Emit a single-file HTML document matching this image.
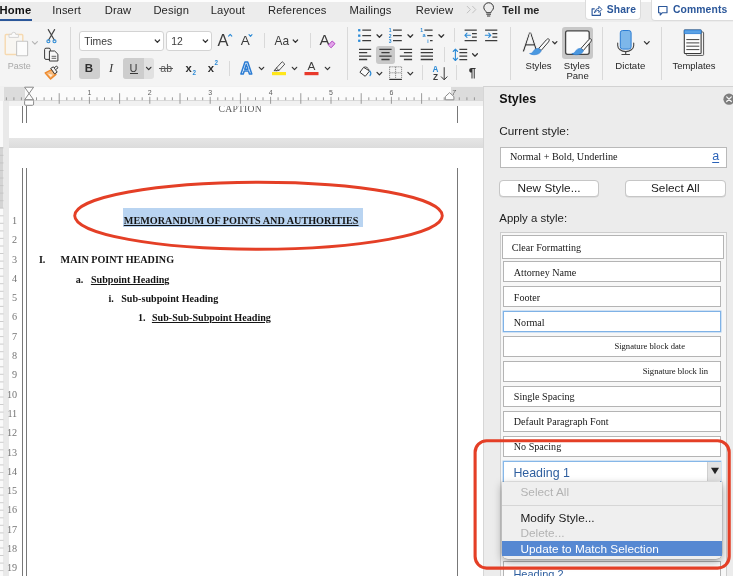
<!DOCTYPE html>
<html lang="en">
<head>
<meta charset="utf-8">
<title>Word - Styles Pane</title>
<style>
html,body{margin:0;padding:0;}
body{width:733px;height:576px;position:relative;overflow:hidden;background:#ececec;
  font-family:"Liberation Sans",sans-serif;color:#222;}
#root{position:absolute;left:0;top:0;width:733px;height:576px;overflow:hidden;will-change:transform;}
.a{position:absolute;}
.t{position:absolute;white-space:nowrap;line-height:14px;height:14px;}
.sans{font-family:"Liberation Sans",sans-serif;}
.serif{font-family:"Liberation Serif",serif;}
.b{font-weight:bold;}
.u{text-decoration:underline;text-decoration-thickness:1px;text-underline-offset:.6px;}

/* ---------- tab bar ---------- */
#topwhite{left:0;top:0;width:733px;height:2px;background:#fdfdfd;}
#tabbar{left:0;top:2px;width:733px;height:20px;background:#ececec;}
.tab{font-size:11.2px;color:#262626;top:2.8px;letter-spacing:.13px;}
.tabbtn{background:#fff;border:1px solid #dcdcdc;border-top:none;border-radius:0 0 4px 4px;box-sizing:border-box;}
.blue{color:#2b579a;}

/* ---------- ribbon ---------- */
#ribbon{left:0;top:22px;width:733px;height:65px;background:#f4f4f4;border-bottom:1px solid #d4d4d4;box-sizing:border-box;}
.vsep{position:absolute;width:1px;background:#d9d9d9;}
.field{position:absolute;background:#fff;border:1px solid #d3d3d3;border-radius:3px;box-sizing:border-box;}
.sel{position:absolute;background:#d2d2d2;border-radius:3px;}
.lbl{font-size:9.7px;color:#262626;}

/* ---------- ruler / document ---------- */
#docbg{left:0;top:86px;width:483px;height:490px;background:#f1f1f1;}
#ruler{left:3.5px;top:87px;width:479.5px;height:13.5px;background:#fbfbfb;}
.rgray{position:absolute;top:0;height:13.5px;background:#dcdcdc;}
#vruler{left:0;top:101px;width:3.2px;height:475px;background:#fafafa;}
#vrulerg{left:0;top:147px;width:3.2px;height:61px;background:#d4d4d4;}
.page{position:absolute;background:#fff;}
.vline{position:absolute;width:1px;background:#787878;}
.ln{font-family:"Liberation Serif",serif;font-size:10.2px;color:#747474;width:13px;text-align:right;left:4.2px;}
.doc{font-family:"Liberation Serif",serif;font-weight:bold;font-size:10.15px;color:#141414;}

/* ---------- styles pane ---------- */
#pane{left:483px;top:86px;width:250px;height:490px;background:#ececec;border-left:1px solid #d6d6d6;border-top:1px solid #d2d2d2;box-sizing:border-box;}
.ph{font-size:11.7px;color:#1c1c1c;}
.btn{position:absolute;background:#fff;border:1px solid #c6c6c6;border-radius:4px;box-sizing:border-box;
  font-size:11.8px;text-align:center;color:#1c1c1c;line-height:16px;box-shadow:0 0.5px 0.5px rgba(0,0,0,.12);}
.item{position:absolute;left:503px;width:218px;height:21px;background:#fff;border:1px solid #b4b4b4;box-sizing:border-box;}
.it{font-family:"Liberation Serif",serif;font-size:10.1px;color:#161616;}
.mi{font-size:11.8px;left:520.5px;}
</style>
</head>
<body>
<div id="root">

<!-- ================= TAB BAR ================= -->
<div class="a" id="tabbar"></div>
<div class="a" id="topwhite"></div>
<div class="t tab b" style="left:-0.6px;color:#111;letter-spacing:.25px;">Home</div>
<div class="a" style="left:0;top:18.5px;width:32px;height:2px;background:#2b579a;"></div>
<div class="t tab" style="left:52.3px;">Insert</div>
<div class="t tab" style="left:104.7px;">Draw</div>
<div class="t tab" style="left:153.4px;">Design</div>
<div class="t tab" style="left:210.7px;">Layout</div>
<div class="t tab" style="left:268px;">References</div>
<div class="t tab" style="left:349.5px;">Mailings</div>
<div class="t tab" style="left:415.7px;">Review</div>

<div class="t tab b" style="left:502.2px;font-size:10.8px;">Tell me</div>
<div class="a tabbtn" style="left:584.5px;top:0;width:56.5px;height:20px;"></div>
<div class="t tab b blue" style="left:606.8px;font-size:10.3px;">Share</div>
<div class="a tabbtn" style="left:650.5px;top:0;width:90px;height:20.5px;"></div>
<div class="t tab b blue" style="left:672.9px;font-size:10.35px;">Comments</div>

<svg class="a" style="left:0;top:0;" width="733" height="22" viewBox="0 0 733 22" fill="none" stroke-linecap="round" stroke-linejoin="round">
  <path d="M467.2 6.300l3.200 3.300l-3.200 3.300M472.600 6.300l3.200 3.300l-3.200 3.300" stroke="#c2c2c2" stroke-width="1"/>
  <path d="M486.400 12.300c0 -1.200 -2.600 -2.300 -2.600 -4.700a4.850 4.850 0 0 1 9.700 0c0 2.400 -2.600 3.500 -2.600 4.700zM486.700 14.200h3.900M487.400 16h2.500" stroke="#333" stroke-width="1"/>
  <path d="M594.300 8.800h-2.200v6.500h8.300v-2.600" stroke="#2b579a" stroke-width="1.150"/>
  <path d="M594.600 12.600c.3 -2.700 2 -4.100 4.300 -4.100v-2.200l3 3.100l-3 3.100v-2.100c-1.800 0 -3.200 .6 -4.300 2.200z" stroke="#2b579a" stroke-width="1"/>
  <path d="M658.600 6.500h8.400v6.200h-4.600l-2.200 2.300v-2.300h-1.600z" stroke="#2b579a" stroke-width="1.150"/>
</svg>
<!-- ================= RIBBON ================= -->
<div class="a" id="ribbon"></div>
<!-- group separators -->
<div class="vsep" style="left:69.5px;top:27px;height:53px;"></div>
<div class="vsep" style="left:346.5px;top:27px;height:53px;"></div>
<div class="vsep" style="left:509.5px;top:27px;height:53px;"></div>
<div class="vsep" style="left:601.5px;top:27px;height:53px;"></div>
<div class="vsep" style="left:661px;top:27px;height:53px;"></div>
<!-- small separators -->
<div class="vsep" style="left:263.5px;top:33px;height:15px;"></div>
<div class="vsep" style="left:309.5px;top:33px;height:15px;"></div>
<div class="vsep" style="left:228.5px;top:61px;height:15px;"></div>
<div class="vsep" style="left:453.5px;top:28px;height:14px;"></div>
<div class="vsep" style="left:443.5px;top:47px;height:15px;"></div>
<div class="vsep" style="left:421.5px;top:65px;height:15px;"></div>
<div class="vsep" style="left:456px;top:65px;height:15px;"></div>

<!-- font name / size fields -->
<div class="field" style="left:78.5px;top:31px;width:85px;height:20px;"></div>
<div class="field" style="left:165.5px;top:31px;width:46px;height:20px;"></div>
<div class="t" style="left:84.3px;top:34.5px;font-size:10.4px;color:#3c3c3c;">Times</div>
<div class="t" style="left:171.2px;top:34.5px;font-size:10.4px;color:#3c3c3c;">12</div>

<!-- selected buttons backgrounds -->
<div class="sel" style="left:78.5px;top:58px;width:21px;height:20.5px;background:#cfcfcf;"></div>
<div class="sel" style="left:123.3px;top:58px;width:31px;height:20.5px;background:#e1e1e1;"></div>
<div class="sel" style="left:123.3px;top:58px;width:20.5px;height:20.5px;background:#cdcdcd;border-radius:3px 0 0 3px;"></div>
<div class="sel" style="left:376px;top:46px;width:18.5px;height:17.5px;background:#c9c9c9;"></div>
<div class="sel" style="left:561.5px;top:27px;width:31.5px;height:31.5px;background:#c8c8c8;"></div>

<!-- text glyph buttons -->
<div class="t b" style="left:84.5px;top:61px;font-size:11.5px;color:#2e2e2e;width:9px;text-align:center;">B</div>
<div class="t serif" style="left:107px;top:61px;font-size:12.5px;color:#3a3a3a;width:8px;text-align:center;font-style:italic;">I</div>
<div class="t" style="left:129px;top:60.5px;font-size:11px;color:#3a3a3a;width:9px;text-align:center;">U</div>
<div class="a" style="left:129.5px;top:73.3px;width:8px;height:1px;background:#3a3a3a;"></div>
<div class="t" style="left:160.3px;top:61px;font-size:10.5px;color:#555;text-decoration:line-through;">ab</div>
<div class="a" style="left:159.3px;top:68.2px;width:13.6px;height:1px;background:#555;"></div>
<div class="t b" style="left:185.5px;top:60.8px;font-size:11.3px;color:#2e2e2e;">x</div>
<div class="t b" style="left:192.5px;top:66.2px;font-size:6.3px;color:#2b8ad6;">2</div>
<div class="t b" style="left:207.8px;top:60.8px;font-size:11.3px;color:#2e2e2e;">x</div>
<div class="t b" style="left:214.6px;top:56px;font-size:6.3px;color:#2b8ad6;">2</div>
<div class="t" style="left:217.5px;top:32.5px;font-size:16.5px;color:#3c3c3c;">A</div>
<div class="t" style="left:240.8px;top:34px;font-size:13.5px;color:#3c3c3c;">A</div>
<div class="t" style="left:274.6px;top:34px;font-size:11.9px;color:#3c3c3c;">Aa</div>
<div class="t" style="left:319.5px;top:33px;font-size:15px;color:#3c3c3c;">A</div>
<div class="t" style="left:307.6px;top:59.4px;font-size:11.8px;color:#3c3c3c;">A</div>
<div class="t lbl" style="left:7.8px;top:58.8px;font-size:9px;color:#a9a9a9;">Paste</div>

<svg class="a" style="left:0;top:0;" width="733" height="90" viewBox="0 0 733 90" fill="none" stroke-linecap="round" stroke-linejoin="round">
  <!-- paste -->
  <rect x="5.2" y="34.5" width="17.6" height="20" rx="1" stroke="#f6d9b0" stroke-width="1.4" fill="#f8f6f2"/>
  <path d="M9 37 v-2.6 h2.6 a2.1 2.1 0 0 1 4.2 0 h2.6 v2.6z" fill="#fafafa" stroke="#d4d4d4" stroke-width="1"/>
  <rect x="16.6" y="41.2" width="11" height="14.6" rx=".6" fill="#fcfcfc" stroke="#c6c6c6" stroke-width="1.1"/>
  <path d="M32.4 41.6 l2.5 2.6 l2.5 -2.6" stroke="#b4b4b4" stroke-width="1.1"/>
  <!-- scissors -->
  <path d="M48.3 29.6 L54.3 40 M54.6 29.6 L48.6 40" stroke="#444" stroke-width="1.15"/>
  <circle cx="48.4" cy="41.3" r="1.5" stroke="#2b8ad6" stroke-width="1.1"/>
  <circle cx="54.5" cy="41.3" r="1.5" stroke="#2b8ad6" stroke-width="1.1"/>
  <!-- copy -->
  <path d="M49.6 59.4 h-3.6 a1.4 1.4 0 0 1 -1.4 -1.4 v-8.4 a1.4 1.4 0 0 1 1.4 -1.4 h3 a1.4 1.4 0 0 1 1.4 1.4 v.9" stroke="#3a3a3a" stroke-width="1"/>
  <path d="M49.8 51 h4.9 l3.2 3.2 v6.8 h-8.1z" stroke="#3a3a3a" stroke-width="1" fill="#f8f8f8"/>
  <path d="M52 56.3 h3.8 M52 58.3 h3.8" stroke="#3a3a3a" stroke-width=".8"/>
  <!-- format painter -->
  <path d="M45.3 72.9 L52.3 69.4 L55.9 74.4 L50.6 79z" fill="#f7b878" stroke="#ee8a2e" stroke-width="1.5"/>
  <path d="M48 73.800 L50.8 77 L52.6 74.700z" fill="#fdeedd" stroke="none"/>
  <path d="M51 68.2 l2.4 -1.4 l3.8 5.3 l-2.3 1.6z" fill="#f4f4f4" stroke="#3a3a3a" stroke-width="1"/>
  <path d="M54.4 67.6 l2.2 -1.6 l1.4 1.8 l-2.2 1.7" stroke="#3a3a3a" stroke-width="1" fill="#f4f4f4"/>

  <!-- chevrons font row -->
  <g stroke="#333" stroke-width="1.2">
    <path d="M155.2 40 l2.2 2.3 l2.2 -2.3"/>
    <path d="M203.2 40 l2.2 2.3 l2.2 -2.3"/>
    <path d="M293.2 40 l2.2 2.3 l2.2 -2.3"/>
    <path d="M146.5 67.3 l2.2 2.3 l2.2 -2.3"/>
    <path d="M259.3 67.3 l2.2 2.3 l2.2 -2.3"/>
    <path d="M292.3 67.3 l2.2 2.3 l2.2 -2.3"/>
    <path d="M325.3 67.3 l2.2 2.3 l2.2 -2.3"/>
  </g>
  <!-- grow / shrink carets -->
  <path d="M228.6 36.2 l1.6 -1.9 l1.6 1.9" stroke="#2b8ad6" stroke-width="1.1"/>
  <path d="M249 34.6 l1.5 1.8 l1.5 -1.8" stroke="#2b8ad6" stroke-width="1.1"/>
  <!-- clear formatting eraser -->
  <path d="M328.6 44.8 l3.6 -3.8 l2.8 2.6 l-3.6 3.9z" fill="#e3a4ea" stroke="#b146c2" stroke-width="1"/>
  <!-- text effects A -->
  <text x="240.6" y="73.7" font-family="Liberation Sans, sans-serif" font-weight="bold" font-size="16.2" fill="#fff" stroke="#2b7cd3" stroke-width="1.5">A</text>
  <!-- highlighter -->
  <path d="M276.6 67.800l5.600 -6.100l2.600 2.400l-5.600 6.100zM276.600 67.800l-1.300 1.700l1.500 1.300l2.400 -.6M275.300 69.500l-1.400 1.200h2.700" stroke="#444" stroke-width=".9" fill="none"/>
  <rect x="272" y="72" width="14" height="3.2" fill="#ffe61a" stroke="none"/>
  <!-- font color bar -->
  <rect x="304.5" y="72" width="14" height="3.2" fill="#e8392b" stroke="none"/>
</svg>

<!-- ribbon labels (right) -->
<div class="t lbl" style="left:525.6px;top:58.7px;font-size:9.55px;">Styles</div>
<div class="t lbl" style="left:563.8px;top:58.7px;font-size:9.55px;">Styles</div>
<div class="t lbl" style="left:566.4px;top:69px;font-size:9.55px;">Pane</div>
<div class="t lbl" style="left:615.3px;top:58.7px;font-size:9.64px;">Dictate</div>
<div class="t lbl" style="left:672.5px;top:58.7px;font-size:9.45px;">Templates</div>
<!-- Styles big A -->
<div class="t" style="left:521.6px;top:27.8px;height:28px;line-height:28px;font-size:28.8px;color:#333;-webkit-text-stroke:1px #f4f4f4;transform:scaleX(.84);transform-origin:0 0;">A</div>
<!-- sort A/Z, pilcrow -->
<div class="t b" style="left:432.6px;top:63px;font-size:8.2px;color:#2b8ad6;">A</div>
<div class="t b" style="left:433px;top:70.5px;font-size:8.2px;color:#3a3a3a;">Z</div>
<div class="t b" style="left:468.8px;top:66.3px;font-size:13px;color:#333;">&para;</div>
<!-- list numbering glyphs -->
<div class="t b" style="left:388.8px;top:23.3px;font-size:5px;color:#2b8ad6;">1</div>
<div class="t b" style="left:388.8px;top:28.6px;font-size:5px;color:#2b8ad6;">2</div>
<div class="t b" style="left:388.8px;top:33.8px;font-size:5px;color:#2b8ad6;">3</div>
<div class="t b" style="left:420.2px;top:23.3px;font-size:5px;color:#2b8ad6;">1</div>
<div class="t b" style="left:422.6px;top:28.4px;font-size:5.5px;color:#2b8ad6;">a</div>
<div class="t b" style="left:427.2px;top:33.8px;font-size:5px;color:#2b8ad6;">i</div>

<svg class="a" style="left:0;top:0;" width="733" height="90" viewBox="0 0 733 90" fill="none" stroke-linecap="butt" stroke-linejoin="round">
  <!-- bullets -->
  <g stroke="#3c3c3c" stroke-width="1.25">
    <path d="M362.3 30.2h8.8M362.3 35.6h8.8M362.3 40.7h8.8"/>
    <path d="M393 30.2h8.8M393 35.6h8.8M393 40.7h8.8"/>
    <path d="M424.4 30.2h8.2M427.2 35.6h5.4M430 40.7h2.6"/>
  </g>
  <g fill="#2b8ad6"><rect x="358.1" y="29.1" width="2.3" height="2.3"/><rect x="358.1" y="34.5" width="2.3" height="2.3"/><rect x="358.1" y="39.6" width="2.3" height="2.3"/></g>
  <!-- chevrons -->
  <g stroke="#333" stroke-width="1.25" stroke-linecap="round">
    <path d="M377 34.8 l2.4 2.5 l2.4 -2.5"/>
    <path d="M407.9 34.8 l2.4 2.5 l2.4 -2.5"/>
    <path d="M438.9 34.8 l2.4 2.5 l2.4 -2.5"/>
    <path d="M472.6 53.7 l2.4 2.5 l2.4 -2.5"/>
    <path d="M377 72.4 l2.4 2.5 l2.4 -2.5"/>
    <path d="M407.9 72.4 l2.4 2.5 l2.4 -2.5"/>
    <path d="M552.7 41.6 l2.1 2.2 l2.1 -2.2"/>
    <path d="M644.4 41.6 l2.4 2.5 l2.4 -2.5"/>
  </g>
  <!-- alignment -->
  <g stroke="#3c3c3c" stroke-width="1.3">
    <path d="M359 49.3h12.2M359 52.7h8.2M359 56.1h12.2M359 59.5h8.2"/>
    <path d="M379.3 49.3h12.3M381.4 52.7h8.2M379.3 56.1h12.3M381.4 59.5h8.2"/>
    <path d="M399.8 49.3h12.3M403.9 52.7h8.2M399.8 56.1h12.3M403.9 59.5h8.2"/>
    <path d="M420.7 49.3h12.3M420.7 52.7h12.3M420.7 56.1h12.3M420.7 59.5h12.3"/>
  </g>
  <!-- outdent / indent -->
  <g stroke="#3c3c3c" stroke-width="1.25">
    <path d="M464.6 30h12.2M472 33.6h4.8M472 37.1h4.8M464.6 40.6h12.2"/>
    <path d="M485.1 30h12.2M492.4 33.6h4.9M492.4 37.1h4.9M485.1 40.6h12.2"/>
  </g>
  <g stroke="#2b8ad6" stroke-width="1.1" stroke-linecap="round">
    <path d="M470.4 35.3h-5.4M467 33.2l-2.1 2.1l2.1 2.1"/>
    <path d="M485.3 35.3h5.4M488.7 33.2l2.1 2.1l-2.1 2.1"/>
    <!-- line spacing arrows -->
    <path d="M455.4 49.3v11M453.2 51.5l2.2 -2.3l2.2 2.3M453.2 58.2l2.2 2.3l2.2 -2.3"/>
  </g>
  <path d="M459.4 49.3h7.8M459.4 52.7h7.8M459.4 56.2h7.8M459.4 59.6h7.8" stroke="#3c3c3c" stroke-width="1.3"/>
  <!-- paint bucket -->
  <path d="M363.6 67.3 l-3.7 5 l5.3 4 l4.4 -5.3z" stroke="#3a3a3a" stroke-width="1" fill="#fafafa"/>
  <path d="M364 67.2 c2.2 -.9 4.2 .6 5.2 3.2" stroke="#3a3a3a" stroke-width=".9"/>
  <path d="M370 71.2 c1.1 1.6 1.1 3.2 0 4.4" stroke="#2b8ad6" stroke-width="1.2" stroke-linecap="round"/>
  <!-- borders -->
  <g stroke="#555" stroke-width=".8" stroke-dasharray="1 1">
    <path d="M389.6 66.8h12M389.6 72.8h12M389.6 66.8v12M395.6 66.8v12M401.6 66.8v12"/>
  </g>
  <path d="M389.3 79.4h12.6" stroke="#333" stroke-width="1.2"/>
  <!-- sort arrow -->
  <path d="M444.2 67.6v12M441.3 76.8l2.9 3l2.9 -3" stroke="#3a3a3a" stroke-width="1" stroke-linecap="round"/>

  <!-- Styles brush -->
  <g id="brush">
    <path d="M548.7 38.9 c.9 .6 .6 1.8 -.2 3 l-7.4 8.6 l-2.4 -2 l7.6 -8.6 c.8 -.9 1.7 -1.4 2.4 -1z" fill="#fafafa" stroke="#3a3a3a" stroke-width="1"/>
    <path d="M538.6 48.4 l2.6 2.2 c-.6 2.6 -3.4 4 -6.4 4.1 c-2 .1 -3.8 -.3 -5.2 -1.200 c1.800 0 2.800 -.7 3.500 -2 c.9 -1.800 3 -3.300 5.500 -3.100z" fill="#4a98e0" stroke="#2b7cd3" stroke-width=".6"/>
  </g>
  <!-- Styles Pane -->
  <rect x="565.6" y="30.8" width="23.600" height="23.500" rx="2" fill="#fbfbfb" stroke="#444" stroke-width="1.300"/>
  <g transform="translate(42.2 0)">
    <path d="M548.7 38.9 c.9 .6 .6 1.8 -.2 3 l-7.4 8.6 l-2.4 -2 l7.6 -8.6 c.8 -.9 1.7 -1.4 2.4 -1z" fill="#fafafa" stroke="#3a3a3a" stroke-width="1"/>
    <path d="M538.6 48.4 l2.6 2.2 c-.6 2.6 -3.4 4 -6.4 4.1 c-2 .1 -3.8 -.3 -5.2 -1.200 c1.800 0 2.800 -.7 3.500 -2 c.9 -1.800 3 -3.300 5.500 -3.100z" fill="#4a98e0" stroke="#2b7cd3" stroke-width=".6"/>
  </g>
  <!-- Dictate mic -->
  <rect x="620.3" y="30.5" width="10.800" height="18.600" rx="2.300" fill="#7db7ea" stroke="#2b7cd3" stroke-width="1"/>
  <path d="M617.7 43v2.400a8 6.200 0 0 0 16 0v-2.400" stroke="#444" stroke-width="1.100" stroke-linecap="round"/>
  <path d="M625.7 51.600v2.800M621.900 54.500h7.600" stroke="#444" stroke-width="1.100" stroke-linecap="round"/>
  <!-- Templates -->
  <rect x="686.3" y="32" width="17.300" height="23.400" rx=".8" fill="#f4f4f4" stroke="#555" stroke-width="1"/>
  <rect x="684.300" y="30" width="16.800" height="23.500" rx=".8" fill="#fdfdfd" stroke="#3a3a3a" stroke-width="1.100"/>
  <rect x="684.300" y="30" width="16.800" height="3.600" fill="#5aa2e6" stroke="#2b7cd3" stroke-width=".8"/>
  <path d="M686.300 39.600h13M686.300 42.900h13M686.300 46.200h13M686.300 49.600h13" stroke="#444" stroke-width="1"/>
</svg>


<!-- ================= DOCUMENT ================= -->
<div class="a" id="docbg"></div>
<div class="a" id="ruler"><div class="rgray" style="left:0;width:21px;"></div><div class="rgray" style="left:447px;width:32.5px;"></div></div>
<div class="a" style="left:4px;top:100px;width:479px;height:1px;background:#d9d9d9;"></div>
<svg class="a" style="left:0;top:86px;" width="483" height="22" viewBox="0 86 483 22" fill="none"><path d="M6.4 97.3V100.2M13.9 97.3V100.2M21.4 97.3V100.2M36.5 97.3V100.2M44.1 97.3V100.2M51.6 97.3V100.2M59.2 93.2V103.8M66.8 97.3V100.2M74.3 97.3V100.2M81.8 97.3V100.2M89.4 96.8V103.8M97.0 97.3V100.2M104.5 97.3V100.2M112.0 97.3V100.2M119.6 93.2V103.8M127.1 97.3V100.2M134.7 97.3V100.2M142.2 97.3V100.2M149.8 96.8V103.8M157.3 97.3V100.2M164.9 97.3V100.2M172.4 97.3V100.2M180.0 93.2V103.8M187.5 97.3V100.2M195.1 97.3V100.2M202.7 97.3V100.2M210.2 96.8V103.8M217.8 97.3V100.2M225.3 97.3V100.2M232.8 97.3V100.2M240.4 93.2V103.8M247.9 97.3V100.2M255.5 97.3V100.2M263.0 97.3V100.2M270.6 96.8V103.8M278.1 97.3V100.2M285.7 97.3V100.2M293.2 97.3V100.2M300.8 93.2V103.8M308.3 97.3V100.2M315.9 97.3V100.2M323.4 97.3V100.2M331.0 96.8V103.8M338.6 97.3V100.2M346.1 97.3V100.2M353.6 97.3V100.2M361.2 93.2V103.8M368.8 97.3V100.2M376.3 97.3V100.2M383.8 97.3V100.2M391.4 96.8V103.8M398.9 97.3V100.2M406.5 97.3V100.2M414.1 97.3V100.2M421.6 93.2V103.8M429.1 97.3V100.2M436.7 97.3V100.2M444.2 97.3V100.2M459.3 97.3V100.2M466.9 97.3V100.2M474.4 97.3V100.2" stroke="#8e8e8e" stroke-width=".9"/><path d="M24.6 87.2H33.6L24.6 99.800H33.6Z" fill="#fdfdfd" stroke="#8a8a8a" stroke-width="1" stroke-linejoin="round"/><rect x="24.6" y="100" width="9" height="5.300" rx="1.2" fill="#fdfdfd" stroke="#8a8a8a" stroke-width="1"/><path d="M445.3 99.8V96.6L449.6 92.6L453.9 96.6V99.8Z" fill="#fdfdfd" stroke="#8a8a8a" stroke-width="1" stroke-linejoin="round"/></svg>
<div class="t" style="left:84.4px;top:85.7px;width:10px;text-align:center;font-size:7px;color:#5c5c5c;">1</div>
<div class="t" style="left:144.8px;top:85.7px;width:10px;text-align:center;font-size:7px;color:#5c5c5c;">2</div>
<div class="t" style="left:205.2px;top:85.7px;width:10px;text-align:center;font-size:7px;color:#5c5c5c;">3</div>
<div class="t" style="left:265.6px;top:85.7px;width:10px;text-align:center;font-size:7px;color:#5c5c5c;">4</div>
<div class="t" style="left:326.0px;top:85.7px;width:10px;text-align:center;font-size:7px;color:#5c5c5c;">5</div>
<div class="t" style="left:386.4px;top:85.7px;width:10px;text-align:center;font-size:7px;color:#5c5c5c;">6</div>
<div class="t" style="left:449.0px;top:85.7px;width:10px;text-align:center;font-size:7px;color:#5c5c5c;font-style:italic;">7</div>
<div class="a" style="left:3.2px;top:101px;width:5.8px;height:475px;background:#e9e9e9;"></div><div class="a" id="vruler"></div><div class="a" id="vrulerg"></div>
<svg class="a" style="left:0;top:0;" width="5" height="576" viewBox="0 0 5 576"><path d="M0 147.8H3.5M0 155.4H3.5M0 162.9H3.5M0 170.5H3.5M0 178.0H3.5M0 185.6H3.5M0 193.1H3.5M0 200.7H3.5M0 208.2H3.5M0 215.8H3.5M0 223.3H3.5M0 230.9H3.5M0 238.4H3.5M0 246.0H3.5M0 253.5H3.5M0 261.1H3.5M0 268.6H3.5M0 276.2H3.5M0 283.7H3.5M0 291.3H3.5M0 298.8H3.5M0 306.4H3.5M0 313.9H3.5M0 321.5H3.5M0 329.0H3.5M0 336.6H3.5M0 344.1H3.5M0 351.7H3.5M0 359.2H3.5M0 366.8H3.5M0 374.3H3.5M0 381.9H3.5M0 389.4H3.5M0 397.0H3.5M0 404.5H3.5M0 412.1H3.5M0 419.6H3.5M0 427.2H3.5M0 434.7H3.5M0 442.3H3.5M0 449.8H3.5M0 457.4H3.5M0 464.9H3.5M0 472.5H3.5M0 480.0H3.5M0 487.6H3.5M0 495.1H3.5M0 502.7H3.5M0 510.2H3.5M0 517.8H3.5M0 525.3H3.5M0 532.9H3.5M0 540.4H3.5M0 548.0H3.5M0 555.5H3.5M0 563.1H3.5M0 570.6H3.5" stroke="#c2c2c2" stroke-width=".8"/></svg>
<div class="page" style="left:9px;top:106px;width:474px;height:32px;"></div>
<div class="a" style="left:9px;top:138px;width:474px;height:10px;background:linear-gradient(#e6e6e6,#dcdcdc);"></div>
<div class="page" style="left:9px;top:148px;width:474px;height:428px;"></div>
<div class="a" style="left:200px;top:106px;width:90px;height:12px;overflow:hidden;"><div class="t serif" style="left:18.6px;top:-4.3px;font-size:9.6px;color:#5e5e5e;letter-spacing:.25px;">CAPTION</div></div>
<div class="vline" style="left:22px;top:106px;height:16.5px;"></div>
<div class="vline" style="left:22px;top:168px;height:408px;"></div>
<div class="vline" style="left:25.8px;top:106px;height:16.5px;"></div>
<div class="vline" style="left:25.8px;top:168px;height:408px;"></div>
<div class="vline" style="left:457px;top:106px;height:16.5px;"></div>
<div class="vline" style="left:457px;top:168px;height:408px;"></div>
<div class="t ln" style="top:214.0px;">1</div>
<div class="t ln" style="top:233.3px;">2</div>
<div class="t ln" style="top:252.6px;">3</div>
<div class="t ln" style="top:271.9px;">4</div>
<div class="t ln" style="top:291.2px;">5</div>
<div class="t ln" style="top:310.4px;">6</div>
<div class="t ln" style="top:329.7px;">7</div>
<div class="t ln" style="top:349.0px;">8</div>
<div class="t ln" style="top:368.3px;">9</div>
<div class="t ln" style="top:387.6px;">10</div>
<div class="t ln" style="top:406.9px;">11</div>
<div class="t ln" style="top:426.2px;">12</div>
<div class="t ln" style="top:445.5px;">13</div>
<div class="t ln" style="top:464.8px;">14</div>
<div class="t ln" style="top:484.1px;">15</div>
<div class="t ln" style="top:503.3px;">16</div>
<div class="t ln" style="top:522.6px;">17</div>
<div class="t ln" style="top:541.9px;">18</div>
<div class="t ln" style="top:561.2px;">19</div>
<div class="a" style="left:123px;top:208.4px;width:240.4px;height:19px;background:#b9d4f1;"></div>
<div class="t doc u" style="left:123.8px;top:214.4px;font-size:10.18px;">MEMORANDUM OF POINTS AND AUTHORITIES</div>
<div class="t doc" style="left:38.9px;top:253.1px;">I.</div>
<div class="t doc" style="left:60.6px;top:253.1px;">MAIN POINT HEADING</div>
<div class="t doc" style="left:75.7px;top:272.8px;">a.</div>
<div class="t doc u" style="left:90.9px;top:272.8px;">Subpoint Heading</div>
<div class="t doc" style="left:108.5px;top:291.8px;">i.</div>
<div class="t doc" style="left:121.2px;top:291.8px;">Sub-subpoint Heading</div>
<div class="t doc" style="left:138px;top:311.1px;">1.</div>
<div class="t doc u" style="left:151.9px;top:311.1px;">Sub-Sub-Subpoint Heading</div>
<svg class="a" style="left:0;top:0;pointer-events:none;" width="733" height="576" viewBox="0 0 733 576" fill="none"><ellipse cx="258.5" cy="215.7" rx="183.8" ry="33.5" stroke="#e43f26" stroke-width="2.9"/></svg>
<!--DOC-END-->

<!-- ================= STYLES PANE ================= -->
<div class="a" id="pane"></div>
<div class="t b" style="left:499.3px;top:92.2px;font-size:12.5px;color:#111;">Styles</div>
<svg class="a" style="left:721.7px;top:92px;" width="14" height="14" viewBox="0 0 14 14"><circle cx="7" cy="7.2" r="5.6" fill="#7d7d7d"/><path d="M4.7 4.9l4.6 4.6M9.3 4.9l-4.6 4.6" stroke="#f2f2f2" stroke-width="1.3" stroke-linecap="round"/></svg>
<div class="t ph" style="left:499.3px;top:124.3px;font-size:11.75px;">Current style:</div>
<div class="a" style="left:500px;top:147px;width:226.5px;height:20.5px;background:#fff;border:1px solid #b9b9b9;box-sizing:border-box;"></div>
<div class="t it" style="left:510px;top:150.2px;font-size:10.2px;">Normal + Bold, Underline</div>
<div class="t" style="left:712.2px;top:149.4px;font-size:12.5px;color:#2a62b8;text-decoration:underline;text-decoration-thickness:1px;text-underline-offset:1.5px;">a</div>
<div class="btn" style="left:499px;top:180px;width:100px;height:17px;line-height:15.5px;">New Style...</div>
<div class="btn" style="left:625px;top:180px;width:100.5px;height:17px;line-height:15.5px;">Select All</div>
<div class="t ph" style="left:499.3px;top:211.3px;font-size:11.4px;">Apply a style:</div>
<div class="a" style="left:499.5px;top:232px;width:227px;height:344px;background:#f7f7f7;border:1px solid #cdcdcd;border-bottom:none;box-sizing:border-box;"></div>
<div class="item" style="left:501.5px;top:234.5px;width:222px;height:24px;"></div>
<div class="t it" style="left:511.8px;top:241px;">Clear Formatting</div>
<div class="item" style="top:261px;"></div>
<div class="t it" style="left:513.8px;top:265.5px;">Attorney Name</div>
<div class="item" style="top:286px;"></div>
<div class="t it" style="left:513.8px;top:290.5px;">Footer</div>
<div class="item" style="top:311px;border:1px solid #7fb2e6;box-shadow:0 0 0 .5px #a9cbef;"></div>
<div class="t it" style="left:513.8px;top:315.5px;">Normal</div>
<div class="item" style="top:336px;"></div>
<div class="t it" style="left:614.4px;top:339.1px;font-size:8.6px;">Signature block date</div>
<div class="item" style="top:361px;"></div>
<div class="t it" style="left:642.7px;top:364.1px;font-size:8.6px;">Signature block lin</div>
<div class="item" style="top:386px;"></div>
<div class="t it" style="left:513.8px;top:389.9px;">Single Spacing</div>
<div class="item" style="top:411px;"></div>
<div class="t it" style="left:513.8px;top:414.9px;">Default Paragraph Font</div>
<div class="item" style="top:436px;"></div>
<div class="t it" style="left:513.8px;top:439.9px;">No Spacing</div>
<div class="item" style="top:461px;height:22px;border:1px solid #86b7e8;box-shadow:0 0 0 .5px #b0d0f0;"></div>
<div class="a" style="left:707px;top:462px;width:13.5px;height:19px;background:#e3e3e3;border-left:1px solid #cfcfcf;box-sizing:border-box;"></div>
<svg class="a" style="left:709.5px;top:467px;" width="10" height="8" viewBox="0 0 10 8"><path d="M1 .8H9L5 7.2Z" fill="#222"/></svg>
<div class="t" style="left:513.4px;top:465.7px;font-size:12.4px;color:#2f5f9f;">Heading 1</div>
<div class="item" style="top:561px;height:22px;"></div>
<div class="t" style="left:513.4px;top:566.5px;font-size:11px;color:#2f5f9f;">Heading 2</div>
<div class="a" style="left:502px;top:481.5px;width:219.5px;height:77.5px;background:#efefef;border-radius:0 0 6px 6px;box-shadow:0 3px 8px rgba(0,0,0,.35),0 0 0 .5px rgba(0,0,0,.18);"></div>
<div class="t mi" style="top:484.6px;color:#b3b3b3;">Select All</div>
<div class="a" style="left:502px;top:505px;width:219.5px;height:1px;background:#d6d6d6;"></div>
<div class="t mi" style="top:510.6px;color:#1a1a1a;">Modify Style...</div>
<div class="t mi" style="top:526.2px;color:#b3b3b3;">Delete...</div>
<div class="a" style="left:502px;top:541.3px;width:219.5px;height:14.5px;background:#5688d2;"></div>
<div class="t mi" style="top:541.7px;color:#fff;">Update to Match Selection</div>
<svg class="a" style="left:0;top:0;pointer-events:none;" width="733" height="576" viewBox="0 0 733 576" fill="none"><rect x="475.1" y="440.8" width="254.1" height="127.3" rx="11.5" stroke="#e43f26" stroke-width="3.1"/></svg>
<!--PANE-END-->

</div>
</body>
</html>
